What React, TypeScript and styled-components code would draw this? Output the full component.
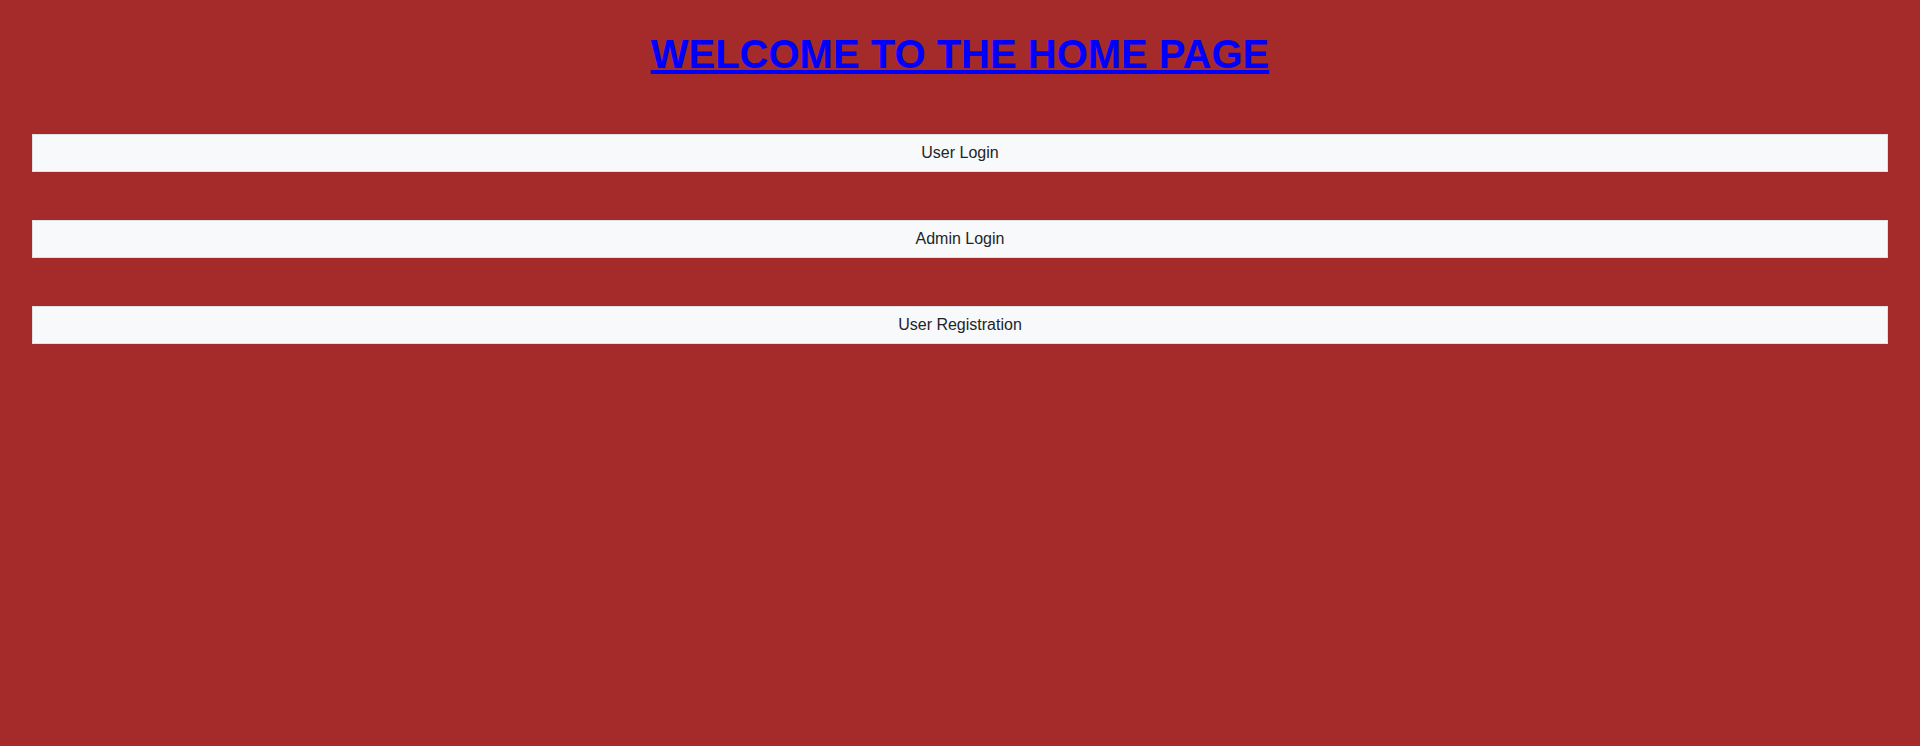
import React from "react";
import styled, { createGlobalStyle } from "styled-components";

const GlobalStyle = createGlobalStyle`
  html, body {
    margin: 0;
    padding: 0;
    background: #a52a2a;
    font-family: "Liberation Sans", Arial, sans-serif;
  }
  body {
    min-height: 746px;
  }
`;

const Page = styled.main`
  min-height: 746px;
  box-sizing: border-box;
  padding: 30px 32px;
  background: #a52a2a;
`;

const Heading = styled.h1`
  margin: 0;
  text-align: center;
  font-family: "Liberation Sans", Arial, sans-serif;
  font-size: 40px;
  font-weight: 700;
  line-height: 48px;
  color: #0000ff;
  text-decoration: underline;
`;

const Menu = styled.nav`
  display: flex;
  flex-direction: column;
  gap: 48px;
  margin-top: 56px;
`;

const MenuButton = styled.button`
  display: block;
  width: 100%;
  box-sizing: border-box;
  padding: 6px 12px;
  border: 1px solid #dde1e5;
  border-radius: 0;
  background: #f8f9fa;
  color: #212529;
  font-family: "Liberation Sans", Arial, sans-serif;
  font-size: 16px;
  line-height: 24px;
  text-align: center;
  cursor: pointer;
`;

const items = ["User Login", "Admin Login", "User Registration"];

export default function App() {
  return (
    <>
      <GlobalStyle />
      <Page>
        <Heading>WELCOME TO THE HOME PAGE</Heading>
        <Menu>
          {items.map((label) => (
            <MenuButton key={label} type="button">
              {label}
            </MenuButton>
          ))}
        </Menu>
      </Page>
    </>
  );
}
